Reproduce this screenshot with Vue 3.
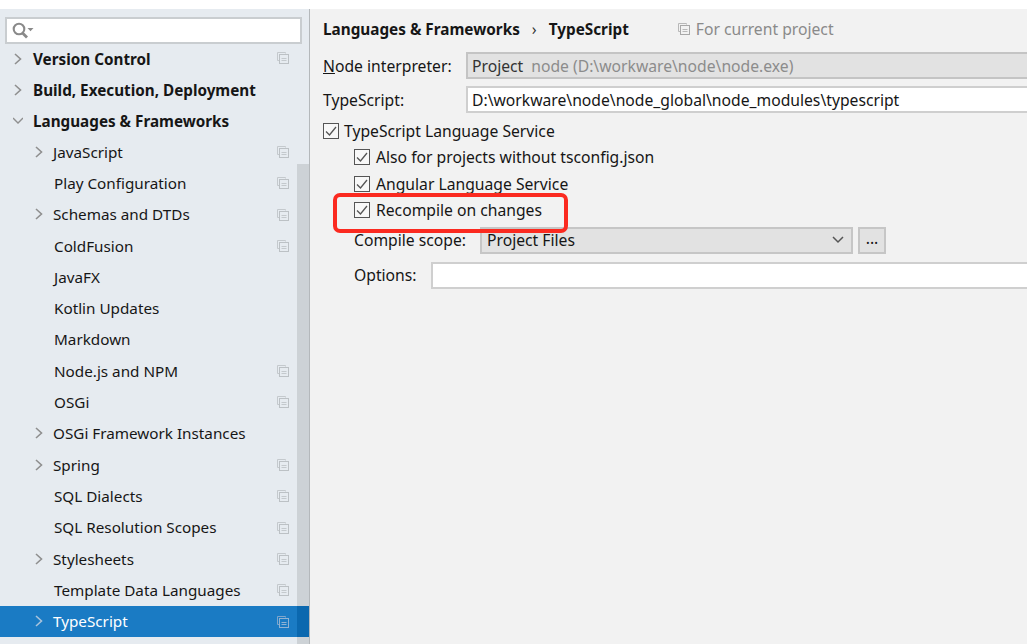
<script setup>
const rows = [
  { label: 'Version Control', level: 0, arrow: 'right', bold: true, copy: true },
  { label: 'Build, Execution, Deployment', level: 0, arrow: 'right', bold: true },
  { label: 'Languages & Frameworks', level: 0, arrow: 'down', bold: true },
  { label: 'JavaScript', level: 1, arrow: 'right', copy: true },
  { label: 'Play Configuration', level: 1, copy: true },
  { label: 'Schemas and DTDs', level: 1, arrow: 'right', copy: true },
  { label: 'ColdFusion', level: 1, copy: true },
  { label: 'JavaFX', level: 1 },
  { label: 'Kotlin Updates', level: 1 },
  { label: 'Markdown', level: 1 },
  { label: 'Node.js and NPM', level: 1, copy: true },
  { label: 'OSGi', level: 1, copy: true },
  { label: 'OSGi Framework Instances', level: 1, arrow: 'right' },
  { label: 'Spring', level: 1, arrow: 'right', copy: true },
  { label: 'SQL Dialects', level: 1, copy: true },
  { label: 'SQL Resolution Scopes', level: 1, copy: true },
  { label: 'Stylesheets', level: 1, arrow: 'right', copy: true },
  { label: 'Template Data Languages', level: 1, copy: true },
  { label: 'TypeScript', level: 1, arrow: 'right', copy: true, selected: true },
]
const checks = ['Also for projects without tsconfig.json', 'Angular Language Service', 'Recompile on changes']
</script>

<template>
  <div class="window">
    <aside class="sidebar">
      <div class="search">
        <svg width="24" height="18" viewBox="0 0 24 18" class="search-icon">
          <circle cx="7" cy="7" r="5.3" fill="none" stroke="#8a8a8a" stroke-width="2.1" />
          <path d="M10.5 11 L15 15.5" stroke="#8a8a8a" stroke-width="2.8" fill="none" />
          <path d="M15.5 6 L21.5 6 L18.5 9.2 Z" fill="#8a8a8a" />
        </svg>
      </div>
      <div class="tree">
        <div
          v-for="row in rows"
          :key="row.label"
          class="row"
          :class="{ selected: row.selected, bold: row.bold, nested: row.level === 1 }"
        >
          <svg v-if="row.arrow" class="arrow" width="10" height="12" viewBox="0 0 10 12">
            <path v-if="row.arrow === 'right'" d="M2 1 L7.5 6 L2 11" fill="none" :stroke="row.selected ? '#a9c3dc' : '#8f8f8f'" stroke-width="1.6" />
            <path v-else d="M0 3 L5 8 L10 3" fill="none" stroke="#8f8f8f" stroke-width="1.4" />
          </svg>
          <span class="label" :class="{ 'with-arrow': row.arrow }">{{ row.label }}</span>
          <svg v-if="row.copy" class="copy" width="12" height="12" viewBox="0 0 12 12">
            <path d="M8.5 1.5 V0.5 H0.5 V8.5 H2.5" fill="none" :stroke="row.selected ? '#7fa6cc' : '#c4c9cd'" />
            <rect x="2.5" y="2.5" width="9" height="9" fill="none" :stroke="row.selected ? '#8fb2d3' : '#bcc1c5'" />
            <path d="M4.5 6.5 H9.5 M4.5 8.5 H9.5" :stroke="row.selected ? '#8fb2d3' : '#c4c9cd'" />
          </svg>
        </div>
      </div>
      <div class="scrollbar"></div>
    </aside>

    <main class="panel">
      <header class="crumbs">
        <strong>Languages &amp; Frameworks</strong>
        <span class="sep">›</span>
        <strong>TypeScript</strong>
        <svg class="project-icon" width="12" height="12" viewBox="0 0 12 12">
          <path d="M8.5 1.5 V0.5 H0.5 V8.5 H2.5" fill="none" stroke="#b8b8b8" />
          <rect x="2.5" y="2.5" width="9" height="9" fill="none" stroke="#a8a8a8" />
          <path d="M4.5 6.5 H9.5 M4.5 8.5 H9.5" stroke="#b8b8b8" />
        </svg>
        <span class="project">For current project</span>
      </header>

      <div class="field first">
        <label class="field-label"><u>N</u>ode interpreter:</label>
        <div class="input disabled"><span class="strong">Project</span><span class="muted">node (D:\workware\node\node.exe)</span></div>
      </div>
      <div class="field second">
        <label class="field-label">TypeScript:</label>
        <div class="input">D:\workware\node\node_global\node_modules\typescript</div>
      </div>

      <div class="check top">
        <span class="box"><svg width="12" height="12" viewBox="0 0 12 12"><path d="M1 6.5 L4.5 10 L11 2" fill="none" stroke="#555" stroke-width="1.3" /></svg></span>
        <span>TypeScript Language Service</span>
      </div>
      <div class="sub">
        <div v-for="c in checks" :key="c" class="check">
          <span class="box"><svg width="12" height="12" viewBox="0 0 12 12"><path d="M1 6.5 L4.5 10 L11 2" fill="none" stroke="#555" stroke-width="1.3" /></svg></span>
          <span>{{ c }}</span>
        </div>
        <div class="scope">
          <label class="scope-label">Compile scope:</label>
          <div class="select">
            <span>Project Files</span>
            <svg width="12" height="8" viewBox="0 0 12 8"><path d="M1 1 L6 6 L11 1" fill="none" stroke="#555" stroke-width="1.5" /></svg>
          </div>
          <div class="dots">...</div>
        </div>
        <div class="options">
          <label class="options-label">Options:</label>
          <div class="input option-input"></div>
        </div>
      </div>

      <div class="highlight"></div>
    </main>
  </div>
</template>

<style>
html, body { margin: 0; background: #fff; }
</style>

<style scoped>
.window {
  width: 1027px;
  height: 644px;
  padding-top: 9px;
  box-sizing: border-box;
  display: flex;
  overflow: hidden;
  font-family: "Noto Sans", "Open Sans", sans-serif;
  font-size: 15.7px;
  color: #161616;
}
.sidebar {
  position: relative;
  width: 310px;
  flex: none;
  box-sizing: border-box;
  background: #e6ebf0;
  border-right: 1px solid #b4b8bb;
  padding-top: 8px;
  overflow: hidden;
  font-size: 15.25px;
}
.search {
  width: 297px;
  height: 27px;
  margin-left: 5px;
  box-sizing: border-box;
  background: #fff;
  border: 2px solid #c9cdd0;
  display: flex;
  align-items: center;
  padding-left: 5px;
}
.tree { margin-top: -2px; }
.row {
  position: relative;
  z-index: 1;
  height: 31.32px;
  box-sizing: border-box;
  display: flex;
  align-items: center;
  padding-left: 13px;
}
.row.nested { padding-left: 34px; }
.row.bold { font-weight: 700; padding-top: 2px; }
.row.selected { background: #1a7bc4; color: #fff; }
.row.selected::after { content: ""; position: absolute; right: 0; top: 0; bottom: 0; width: 12px; background: #0b68af; }
.arrow { flex: none; }
.label { margin-left: 21px; white-space: nowrap; }
.nested .label { margin-left: 20px; }
.label.with-arrow { margin-left: 10px; }
.nested .label.with-arrow { margin-left: 9px; }
.copy { position: absolute; right: 20px; top: 10px; z-index: 1; }
.scrollbar {
  position: absolute;
  top: 155px;
  right: 0;
  bottom: 0;
  width: 12px;
  background: #cdd2d6;
}
.panel {
  position: relative;
  flex: 1;
  min-width: 0;
  background: #f2f2f2;
  padding-left: 13px;
}
.crumbs {
  height: 20px;
  margin-top: 10px;
  display: flex;
  align-items: center;
  white-space: nowrap;
}
.crumbs strong { font-weight: 700; font-size: 15.3px; }
.sep { margin: 0 12px 0 12px; color: #333; }
.project-icon { margin-left: 49px; }
.project { margin-left: 6px; color: #8a8a8a; }
.field { display: flex; align-items: center; height: 27px; }
.field.first { margin-top: 13px; }
.field.second { margin-top: 7px; }
.field-label { width: 143px; flex: none; white-space: nowrap; }
.input {
  flex: 1;
  height: 27px;
  box-sizing: border-box;
  border: 2px solid #cfcfcf;
  border-right: none;
  background: #fff;
  padding-left: 4px;
  display: flex;
  align-items: center;
  white-space: nowrap;
  overflow: hidden;
}
.input.disabled { background: #e2e2e2; border-color: #c4c4c4; }
.strong { color: #333; }
.muted { margin-left: 8px; color: #8c8c8c; }
.check { display: flex; align-items: center; height: 26.4px; gap: 6px; white-space: nowrap; }
.check.top { margin-top: 5px; gap: 5px; height: 26px; }
.box {
  width: 16px;
  height: 16px;
  box-sizing: border-box;
  border: 1px solid #555;
  background: #f8f8f8;
  display: flex;
  align-items: center;
  justify-content: center;
  flex: none;
}
.sub { margin-left: 31px; }
.scope { display: flex; align-items: center; height: 27px; margin-top: 3.8px; }
.scope-label { width: 126px; flex: none; white-space: nowrap; }
.select {
  width: 373px;
  height: 27px;
  flex: none;
  box-sizing: border-box;
  border: 2px solid #c6c6c6;
  background: #e2e2e2;
  display: flex;
  align-items: center;
  justify-content: space-between;
  padding: 0 7px 0 5px;
}
.dots {
  width: 28px;
  height: 27px;
  margin-left: 5px;
  box-sizing: border-box;
  border: 2px solid #c6c6c6;
  background: #e2e2e2;
  display: flex;
  align-items: center;
  justify-content: center;
  padding-bottom: 4px;
}
.options { display: flex; align-items: center; height: 27px; margin-top: 8px; }
.options-label { width: 77px; flex: none; }
.highlight {
  position: absolute;
  left: 23px;
  top: 184px;
  width: 235px;
  height: 40px;
  box-sizing: border-box;
  border: 4px solid #fb2a20;
  border-radius: 7px;
  pointer-events: none;
}
</style>
